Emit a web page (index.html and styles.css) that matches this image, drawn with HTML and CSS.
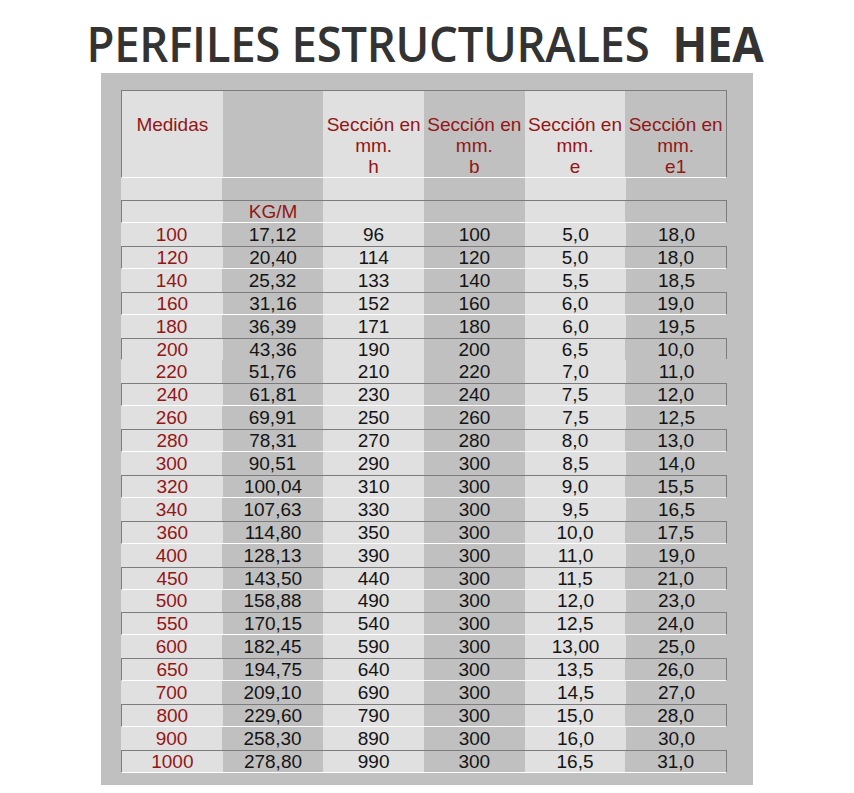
FILE: index.html
```html
<!DOCTYPE html>
<html lang="es">
<head>
<meta charset="utf-8">
<title>Perfiles estructurales HEA</title>
<link rel="stylesheet" href="styles.css">
</head>
<body>
<h1 class="title"><span class="title-text">PERFILES ESTRUCTURALES&nbsp; <b>HEA</b></span></h1>
<div class="panel">
  <div class="sheet">
    <div class="row head bordered">
      <div class="c l red top">Medidas</div>
      <div class="c g"></div>
      <div class="c l red">Sección en<br>mm.<br>h</div>
      <div class="c g red">Sección en<br>mm.<br>b</div>
      <div class="c l red">Sección en<br>mm.<br>e</div>
      <div class="c g red">Sección en<br>mm.<br>e1</div>
    </div>
    <div class="row gap">
      <div class="c l"></div><div class="c g"></div><div class="c l"></div><div class="c g"></div><div class="c l"></div><div class="c g"></div>
    </div>
    <div class="row unit bordered">
      <div class="c l"></div><div class="c g red">KG/M</div><div class="c l"></div><div class="c g"></div><div class="c l"></div><div class="c g"></div>
    </div>
    <div id="rows"></div>
  </div>
</div>
<script src="app.js"></script>
</body>
</html>
```

FILE: app.js
```js
var data = [
["100","17,12","96","100","5,0","18,0"],
["120","20,40","114","120","5,0","18,0"],
["140","25,32","133","140","5,5","18,5"],
["160","31,16","152","160","6,0","19,0"],
["180","36,39","171","180","6,0","19,5"],
["200","43,36","190","200","6,5","10,0"],
["220","51,76","210","220","7,0","11,0"],
["240","61,81","230","240","7,5","12,0"],
["260","69,91","250","260","7,5","12,5"],
["280","78,31","270","280","8,0","13,0"],
["300","90,51","290","300","8,5","14,0"],
["320","100,04","310","300","9,0","15,5"],
["340","107,63","330","300","9,5","16,5"],
["360","114,80","350","300","10,0","17,5"],
["400","128,13","390","300","11,0","19,0"],
["450","143,50","440","300","11,5","21,0"],
["500","158,88","490","300","12,0","23,0"],
["550","170,15","540","300","12,5","24,0"],
["600","182,45","590","300","13,00","25,0"],
["650","194,75","640","300","13,5","26,0"],
["700","209,10","690","300","14,5","27,0"],
["800","229,60","790","300","15,0","28,0"],
["900","258,30","890","300","16,0","30,0"],
["1000","278,80","990","300","16,5","31,0"]
];
var host = document.getElementById("rows");
data.forEach(function (r, i) {
  var row = document.createElement("div");
  row.className = "row data" + (i % 2 ? " bordered" : "");
  r.forEach(function (v, j) {
    var c = document.createElement("div");
    c.className = "c " + (j % 2 ? "g" : "l") + (j === 0 ? " red" : "");
    c.textContent = v;
    row.appendChild(c);
  });
  host.appendChild(row);
});
```

FILE: styles.css
```css
html, body {
  margin: 0;
  padding: 0;
  background: #ffffff;
}
body {
  width: 854px;
  height: 793px;
  overflow: hidden;
}
.title {
  margin: 0;
  height: 73px;
  padding: 14px 5px 0 0;
  box-sizing: border-box;
  display: flex;
  align-items: center;
  justify-content: center;
  font-family: "Open Sans", "DejaVu Sans", sans-serif;
  font-weight: 600;
  font-stretch: normal;
  font-size: 48px;
  line-height: 1;
  color: #333333;
  white-space: nowrap;
}
.title-text {
  display: inline-block;
  letter-spacing: -0.3px;
  transform: scaleX(0.948);
}
.title b {
  font-weight: 700;
}
.panel {
  width: 652px;
  height: 712px;
  margin: 0 auto;
  background: #c0c0c0;
  box-sizing: border-box;
  padding: 17px 0 0 20px;
}
.sheet {
  width: 606px;
  font-family: "Liberation Sans", Arial, sans-serif;
  font-size: 19px;
  color: #141414;
}
.row {
  display: grid;
  grid-template-columns: repeat(6, 1fr);
  box-sizing: border-box;
}
.row.bordered {
  border-top: 1px solid #7c7c7c;
  border-left: 1px solid #7c7c7c;
  border-right: 1px solid #7c7c7c;
  border-bottom: 1px solid #ffffff;
}
.c {
  text-align: center;
  line-height: 21px;
  display: flex;
  align-items: center;
  justify-content: center;
}
.l { background: #e0e0e0; }
.g { background: #c0c0c0; }
.red { color: #921616; }
.head { height: 88px; }
.head .c {
  align-items: flex-start;
  padding-top: 23px;
}
.gap { height: 22px; }
.unit { height: 23px; }
.data { height: 22.92px; }
```
